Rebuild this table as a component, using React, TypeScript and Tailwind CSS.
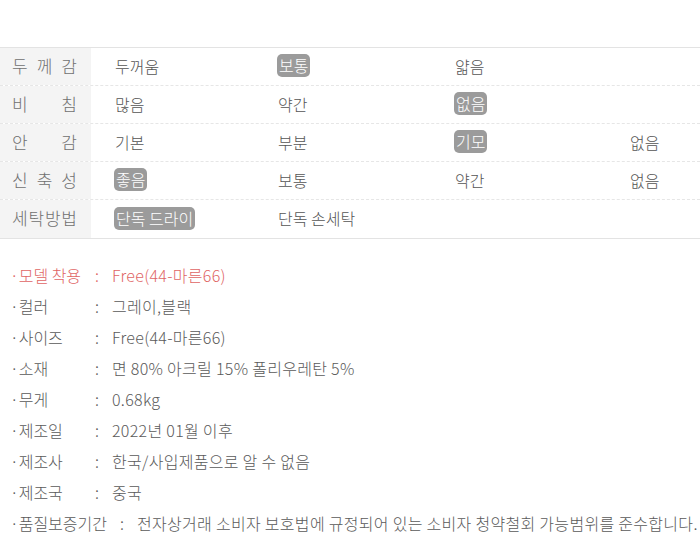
const font = { fontFamily: '"Noto Sans CJK KR", "Noto Sans", sans-serif' };

type Cell = { text: string; on?: boolean };

const rows: { label: string; cells: Cell[] }[] = [
  { label: "두께감", cells: [{ text: "두꺼움" }, { text: "보통", on: true }, { text: "얇음" }, { text: "" }] },
  { label: "비침", cells: [{ text: "많음" }, { text: "약간" }, { text: "없음", on: true }, { text: "" }] },
  { label: "안감", cells: [{ text: "기본" }, { text: "부분" }, { text: "기모", on: true }, { text: "없음" }] },
  { label: "신축성", cells: [{ text: "좋음", on: true }, { text: "보통" }, { text: "약간" }, { text: "없음" }] },
  { label: "세탁방법", cells: [{ text: "단독 드라이", on: true }, { text: "단독 손세탁" }, { text: "" }, { text: "" }] },
];

const info = [
  { label: "·모델 착용", value: "Free(44-마른66)", red: true },
  { label: "·컬러", value: "그레이,블랙" },
  { label: "·사이즈", value: "Free(44-마른66)" },
  { label: "·소재", value: "면 80% 아크릴 15% 폴리우레탄 5%" },
  { label: "·무게", value: "0.68kg" },
  { label: "·제조일", value: "2022년 01월 이후" },
  { label: "·제조사", value: "한국/사입제품으로 알 수 없음" },
  { label: "·제조국", value: "중국" },
  { label: "·품질보증기간", value: "전자상거래 소비자 보호법에 규정되어 있는 소비자 청약철회 가능범위를 준수합니다." },
];

const colW = ["w-[163px]", "w-[177px]", "w-[175px]", "flex-1"];

export default function App() {
  return (
    <div className="w-[700px] h-[554px] bg-white overflow-hidden pt-[47px]" style={font}>
      <section className="border-t border-b border-[#e3e3e3]">
        {rows.map((row, i) => (
          <div
            key={row.label}
            className={`flex h-[38px] ${i < rows.length - 1 ? "border-b border-dashed border-[#e6e6e6]" : ""}`}
          >
            <div className="w-[91px] bg-[#f4f4f4] flex items-center pl-[12px] pb-[2px]">
              <div className="w-[65px] flex justify-between text-[17px] font-light text-[#707070]">
                {row.label.split("").map((ch, k) => (
                  <span key={k}>{ch}</span>
                ))}
              </div>
            </div>
            {row.cells.map((c, k) => (
              <div key={k} className={`${colW[k]} flex items-center pl-[24px] pb-[2px] text-[16px] font-light text-[#555]`}>
                {c.on ? (
                  <span className="bg-[#9b9b9b] text-white rounded-[5px] px-[2px] -ml-[1px] leading-[23px]">{c.text}</span>
                ) : (
                  <span>{c.text}</span>
                )}
              </div>
            ))}
          </div>
        ))}
      </section>

      <section className="mt-[20px] pl-[10px]">
        {info.map((it) => (
          <div
            key={it.label}
            className={`flex items-center h-[31px] font-light ${it.red ? "text-[#e06464]" : "text-[#5a5a5a]"}`}
          >
            <span className="min-w-[72px] text-[16px] whitespace-nowrap">{it.label}</span>
            <span className="w-[30px] text-center text-[16px]">:</span>
            <span className="text-[16px] tracking-[0.3px] whitespace-nowrap">{it.value}</span>
          </div>
        ))}
      </section>
    </div>
  );
}
